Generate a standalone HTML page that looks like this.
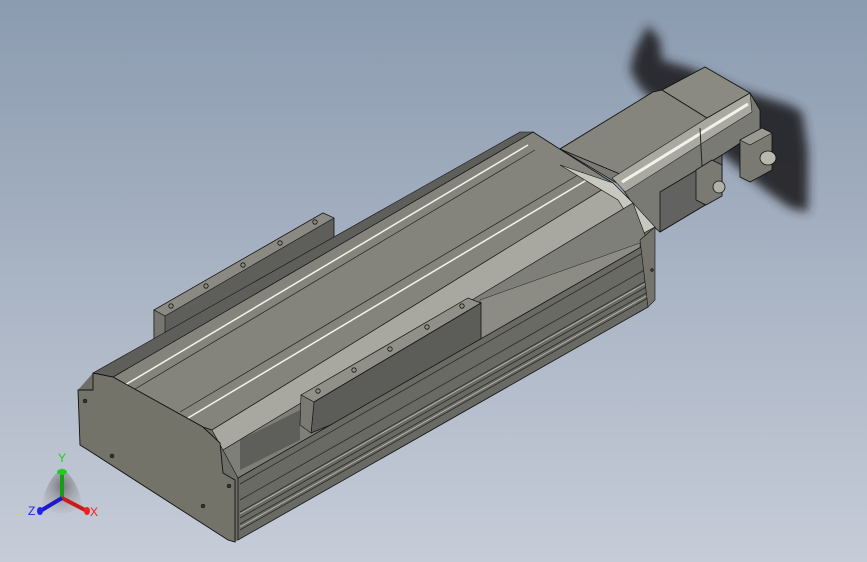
<!DOCTYPE html>
<html><head><meta charset="utf-8"><style>
html,body{margin:0;padding:0;}
body{width:867px;height:562px;overflow:hidden;background:linear-gradient(180deg,#8b9bb0 0%,#a9b4c4 50%,#c6ccd8 100%);}
svg{position:absolute;left:0;top:0;}
text{font-family:"Liberation Sans",sans-serif;font-size:12px;}
</style></head><body>
<svg width="867" height="562" viewBox="0 0 867 562">
<defs>
<filter id="bl" x="-30%" y="-30%" width="160%" height="160%"><feGaussianBlur stdDeviation="5"/></filter>
<radialGradient id="tri" cx="50%" cy="40%" r="60%"><stop offset="0" stop-color="#555"/><stop offset="1" stop-color="#aaa" stop-opacity="0.3"/></radialGradient>
</defs>
<!-- shadow -->
<path d="M648,25 L660,40 L662,60 L690,68 L740,90 L790,105 L802,112 L808,150 L808,212 L790,208 L765,190 L735,165 L700,135 L665,110 L640,88 L630,70 L635,50 Z" fill="#26262a" filter="url(#bl)" opacity="0.95"/>
<!-- motor tube -->
<polygon points="560,149 653,92 662,90 707,118 750,93 760,110 760,130 722,155 722,195 660,232 640,215 620,185" fill="#7a7a74" stroke="#111" stroke-width="0.8"/>
<polygon points="560,149 653,92 662,90 707,118 620,174" fill="#85857e" stroke="#111" stroke-width="0.8"/>
<polygon points="612,178 707,118 750,93 752,112 712,137 625,192" fill="#a9a9a1" stroke="#222" stroke-width="0.6"/>
<line x1="622" y1="182" x2="748" y2="104" stroke="#f2f2ea" stroke-width="3"/>
<polygon points="662,90 705,67 750,93 707,118" fill="#8a8a83" stroke="#111" stroke-width="0.8"/>
<polygon points="660,192 722,155 722,195 660,232" fill="#626260" stroke="#111" stroke-width="0.8"/>
<line x1="700" y1="128" x2="704" y2="205" stroke="#222" stroke-width="1"/>
<!-- connector boxes -->
<polygon points="740,140 762,128 772,133 772,170 750,182 740,177" fill="#7a7a73" stroke="#111" stroke-width="0.8"/>
<polygon points="740,140 762,128 772,133 750,145" fill="#9a9a92" stroke="#111" stroke-width="0.6"/>
<ellipse cx="768" cy="158" rx="8" ry="7" fill="#b8b8ae" stroke="#111" stroke-width="0.8"/>
<polygon points="696,170 712,160 722,165 722,196 706,205 696,200" fill="#7a7a73" stroke="#111" stroke-width="0.8"/>
<ellipse cx="719" cy="187" rx="6" ry="6" fill="#b0b0a6" stroke="#111" stroke-width="0.8"/>
<!-- rear bracket -->
<polygon points="154,310 323,213 334,218 334,245 165,345 154,340" fill="#5e5e5a" stroke="#111" stroke-width="0.8"/>
<polygon points="154,310 323,213 334,218 165,316" fill="#8a8a82" stroke="#111" stroke-width="0.6"/>
<polygon points="154,310 165,316 165,345 154,340" fill="#76766e" stroke="#111" stroke-width="0.6"/>
<g fill="none" stroke="#111" stroke-width="0.8"><circle cx="171" cy="306" r="2.2"/><circle cx="206" cy="286" r="2.2"/><circle cx="243" cy="265" r="2.2"/><circle cx="280" cy="243" r="2.2"/><circle cx="315" cy="222" r="2.2"/></g>
<!-- main body -->
<polygon points="93,373 533,132 613,183 633,203 655,227 655,300 648,307 238,540 235,542 228,540 80,445 78,390" fill="#6e6e68"/>
<polygon points="113,377 533,132 613,183 212,430 203,427" fill="#84847d" stroke="#111" stroke-width="0.8"/>
<polygon points="93,373 113,377 533,132 520,132" fill="#5e5e5a" stroke="#111" stroke-width="0.6"/>
<line x1="125" y1="385" x2="528" y2="145" stroke="#f4f4ee" stroke-width="1.5"/>
<line x1="130" y1="392" x2="535" y2="150" stroke="#222" stroke-width="0.7"/>
<line x1="188" y1="418" x2="590" y2="178" stroke="#f4f4ee" stroke-width="1.5"/>
<line x1="180" y1="412" x2="583" y2="172" stroke="#222" stroke-width="0.7"/>
<polygon points="212,430 613,183 633,203 223,450" fill="#a8a8a0" stroke="#111" stroke-width="0.6"/>
<polygon points="560,165 613,183 633,203 655,227 640,235 618,200" fill="#c8c8c0" stroke="#111" stroke-width="0.6"/>
<!-- cavity -->
<polygon points="223,450 633,203 648,243 238,478" fill="#7f7f79" stroke="#111" stroke-width="0.6"/>
<polygon points="480,300 640,243 640,262 481,340" fill="#8c8c85" stroke="#222" stroke-width="0.5"/>
<polygon points="240,440 300,410 300,440 240,470" fill="#5e5e5a"/>
<!-- carriage -->
<polygon points="301,395 468,298 481,303 314,402" fill="#909088" stroke="#111" stroke-width="0.7"/>
<polygon points="314,402 481,303 481,363 311,433" fill="#5c5c59" stroke="#111" stroke-width="0.8"/>
<polygon points="301,395 314,402 311,433 300,425" fill="#7a7a73" stroke="#111" stroke-width="0.6"/>
<g fill="none" stroke="#111" stroke-width="0.8"><circle cx="318" cy="391" r="2.2"/><circle cx="354" cy="370" r="2.2"/><circle cx="390" cy="349" r="2.2"/><circle cx="427" cy="327" r="2.2"/><circle cx="462" cy="306" r="2.2"/></g>
<!-- front rail -->
<polygon points="238,478 648,243 648,307 238,540" fill="#6a6a65" stroke="#111" stroke-width="0.8"/>
<g stroke="#2a2a2a" stroke-width="0.8">
<line x1="240" y1="484" x2="648" y2="250"/><line x1="240" y1="500" x2="648" y2="268"/>
<line x1="240" y1="512" x2="648" y2="280"/><line x1="240" y1="518" x2="648" y2="286"/>
<line x1="240" y1="524" x2="648" y2="292"/><line x1="240" y1="530" x2="648" y2="298"/>
</g>
<g stroke="#c8c8c0" stroke-width="0.7">
<line x1="240" y1="514" x2="648" y2="282"/><line x1="240" y1="527" x2="648" y2="295"/>
</g>
<polygon points="640,240 655,227 655,300 648,307" fill="#74746c" stroke="#111" stroke-width="0.6"/>
<!-- end face -->
<polygon points="93,373 113,377 203,427 220,443 223,473 235,480 235,542 228,540 88,450 80,445 78,390 93,390" fill="#73736a" stroke="#111" stroke-width="0.9"/>
<g fill="#333" stroke="#111" stroke-width="0.5"><circle cx="85" cy="401" r="2"/><circle cx="112" cy="456" r="2"/><circle cx="203" cy="506" r="2"/><circle cx="229" cy="486" r="2"/><circle cx="652" cy="270" r="1.5"/></g>
<!-- triad -->
<path d="M62,468 Q78,480 82,505 Q62,522 42,505 Q46,480 62,468 Z" fill="url(#tri)" opacity="0.7"/>
<line x1="62" y1="498" x2="62" y2="474" stroke="#1a9a1a" stroke-width="4"/>
<ellipse cx="62" cy="472" rx="5" ry="3" fill="#22cc22"/>
<line x1="62" y1="498" x2="85" y2="510" stroke="#cc1a1a" stroke-width="4"/>
<ellipse cx="87" cy="511" rx="3" ry="4" fill="#ee2222"/>
<line x1="62" y1="498" x2="42" y2="510" stroke="#1a1acc" stroke-width="4"/>
<ellipse cx="40" cy="511" rx="3" ry="4" fill="#2222ee"/>
<text x="58" y="462" fill="#22cc22">Y</text>
<text x="90" y="516" fill="#ee2222">X</text>
<text x="28" y="515" fill="#2222ee">Z</text>
</svg>
</body></html>
